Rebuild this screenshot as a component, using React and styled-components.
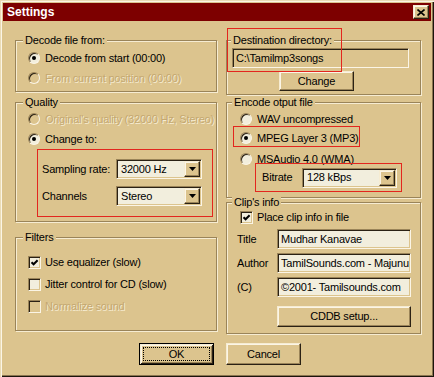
import React from 'react';
import styled, { createGlobalStyle, css } from 'styled-components';

const tan = '#dcc48e';
const cream = '#f2eedd';
const shade = '#9a8459';
const dark = '#2a2114';
const light = '#f6ecd2';
const hilite = '#fbf5e6';
const dim = '#c4a871';
const red = '#e3261e';

const GlobalStyle = createGlobalStyle`
  html, body { margin: 0; padding: 0; background: ${tan}; }
  body {
    font-family: "Liberation Sans", Arial, sans-serif;
    font-size: 11px;
    line-height: 13px;
    letter-spacing: -0.2px;
    color: #000;
  }
`;

const raised = css`
  box-sizing: border-box;
  background: ${tan};
  border: 1px solid;
  border-color: ${light} ${dark} ${dark} ${light};
  box-shadow: inset -1px -1px 0 ${shade}, inset 1px 1px 0 ${hilite};
`;

const sunken = css`
  box-sizing: border-box;
  border: 1px solid;
  border-color: ${shade} ${hilite} ${hilite} ${shade};
  box-shadow: inset 1px 1px 0 ${dark}, inset -1px -1px 0 ${tan};
`;

const Window = styled.div`
  width: 434px;
  height: 377px;
  box-sizing: border-box;
  padding: 3px 3px 0;
  background: ${tan};
  box-shadow: inset 1px 1px 0 #eadbb5, inset 2px 2px 0 ${hilite},
    inset -1px -1px 0 #1b150c, inset -2px -2px 0 #8b7550;
  display: flex;
  flex-direction: column;
`;

const TitleBar = styled.div`
  height: 18px;
  background: #7d0000;
  display: flex;
  align-items: center;
  justify-content: space-between;
  padding: 0 2px 0 4px;
`;

const TitleText = styled.span`
  color: #fff;
  font-weight: bold;
  font-size: 12px;
  letter-spacing: 0;
`;

const CloseButton = styled.div`
  ${raised};
  width: 16px;
  height: 14px;
  display: grid;
  place-items: center;
`;

const Body = styled.div`
  display: grid;
  grid-template-columns: 202px 195px;
  column-gap: 9px;
  align-items: start;
  padding: 19px 0 0 12px;
`;

const Column = styled.div`
  display: flex;
  flex-direction: column;
`;

const Group = styled.div`
  position: relative;
  box-sizing: border-box;
  height: ${p => p.$h}px;
  margin-top: ${p => p.$mt || 0}px;
  border: 1px solid ${shade};
  box-shadow: inset 1px 1px 0 ${light}, 1px 1px 0 ${light};
  display: flex;
  flex-direction: column;
  align-items: flex-start;
`;

const Caption = styled.div`
  margin: -7px 0 0 ${p => p.$ml}px;
  padding: 0 2px;
  height: 13px;
  background: ${tan};
  white-space: nowrap;
`;

/* red annotation frame drawn over the destination caption and path */
const Annotation = styled.div`
  position: absolute;
  left: 0;
  top: -13px;
  width: 115px;
  height: 44px;
  box-sizing: border-box;
  border: 1px solid ${red};
  pointer-events: none;
`;

const Stack = styled.div`
  display: flex;
  flex-direction: column;
  padding: ${p => p.$pt || 0}px 0 0 ${p => p.$pl}px;
`;

const Option = styled.label`
  box-sizing: border-box;
  display: flex;
  align-items: center;
  gap: ${p => p.$gap ?? 5}px;
  height: ${p => p.$h ?? 20}px;
  white-space: nowrap;
  color: ${p => (p.$disabled ? dim : '#000')};
  text-shadow: ${p => (p.$disabled ? `1px 1px 0 ${light}` : 'none')};
  ${p =>
    p.$marked &&
    css`
      width: 127px;
      height: 21px;
      margin: -3px 0 2px -7px;
      padding: 3px 0 0 6px;
      border: 1px solid ${red};
    `}
`;

const RadioDot = styled.span`
  box-sizing: border-box;
  flex: none;
  width: 12px;
  height: 12px;
  border-radius: 50%;
  background: ${p => (p.$disabled ? tan : cream)};
  border: 1px solid;
  border-color: ${shade} ${hilite} ${hilite} ${shade};
  box-shadow: inset 1px 1px 0 ${dark};
  display: grid;
  place-items: center;
  &::after {
    content: '';
    display: ${p => (p.$checked ? 'block' : 'none')};
    width: 4px;
    height: 4px;
    border-radius: 50%;
    background: #000;
  }
`;

const CheckBox = styled.span`
  ${sunken};
  flex: none;
  width: 13px;
  height: 13px;
  background: ${p => (p.$disabled ? tan : cream)};
  display: grid;
  place-items: center;
`;

const ChoiceBox = styled.div`
  box-sizing: border-box;
  width: 176px;
  height: 68px;
  margin-left: 21px;
  border: 1px solid ${red};
  display: grid;
  grid-template-columns: 74px 86px;
  grid-auto-rows: 20px;
  row-gap: 7px;
  align-items: center;
  padding: 9px 0 0 4px;
`;

const BitrateBox = styled.div`
  box-sizing: border-box;
  width: 147px;
  height: 29px;
  margin: -6px 0 0 28px;
  border: 1px solid ${red};
  display: grid;
  grid-template-columns: 40px 95px;
  align-items: center;
  padding-left: 6px;
`;

const Combo = styled.div`
  ${sunken};
  width: ${p => p.$w}px;
  height: 20px;
  background: ${cream};
  display: flex;
  align-items: center;
  padding: 1px;
`;

const ComboValue = styled.span`
  flex: 1;
  padding-left: 3px;
  white-space: nowrap;
`;

const DropButton = styled.span`
  ${raised};
  width: 16px;
  height: 16px;
  display: grid;
  place-items: center;
`;

const Field = styled.div`
  ${sunken};
  width: ${p => p.$w}px;
  height: 20px;
  margin: ${p => p.$m || 0};
  background: ${p => (p.$readOnly ? tan : cream)};
  display: flex;
  align-items: center;
  padding-left: 3px;
  white-space: nowrap;
  overflow: hidden;
`;

const ClipGrid = styled.div`
  display: grid;
  grid-template-columns: 40px 134px;
  grid-auto-rows: 20px;
  row-gap: 4px;
  align-items: center;
  margin: 3px 0 0 10px;
`;

const Button = styled.div`
  ${raised};
  width: ${p => p.$w}px;
  height: ${p => p.$h}px;
  margin: ${p => p.$m || 0};
  display: flex;
  align-items: center;
  justify-content: center;
  position: relative;
  ${p =>
    p.$default &&
    css`
      border: 1px solid #000;
      box-shadow: inset 1px 1px 0 ${light}, inset -1px -1px 0 ${dark},
        inset 2px 2px 0 ${hilite}, inset -2px -2px 0 ${shade};
      &::after {
        content: '';
        position: absolute;
        inset: 3px;
        border: 1px dotted #000;
      }
    `}
`;

const Footer = styled.div`
  display: flex;
  gap: 12px;
  padding: 9px 0 0 136px;
`;

const Arrow = () => (
  <svg width="7" height="4" viewBox="0 0 7 4">
    <path d="M0 0h7L3.5 4z" fill="#000" />
  </svg>
);

const Tick = () => (
  <svg width="9" height="9" viewBox="0 0 9 9">
    <path d="M1.5 4.2 3.6 6.3 7.6 2.2" fill="none" stroke="#000" strokeWidth="2" />
  </svg>
);

const Radio = ({ label, checked, disabled, marked }) => (
  <Option $disabled={disabled} $marked={marked}>
    <RadioDot $checked={checked} $disabled={disabled} />
    {label}
  </Option>
);

const Check = ({ label, checked, disabled, h = 22 }) => (
  <Option $disabled={disabled} $gap={4} $h={h}>
    <CheckBox $disabled={disabled}>{checked && <Tick />}</CheckBox>
    {label}
  </Option>
);

const Select = ({ value, w }) => (
  <Combo $w={w}>
    <ComboValue>{value}</ComboValue>
    <DropButton>
      <Arrow />
    </DropButton>
  </Combo>
);

export default function App() {
  return (
    <>
      <GlobalStyle />
      <Window>
        <TitleBar>
          <TitleText>Settings</TitleText>
          <CloseButton>
            <svg width="8" height="7" viewBox="0 0 8 7">
              <path d="M0.5 0.5 7.5 6.5M7.5 0.5 0.5 6.5" stroke="#000" strokeWidth="1.6" />
            </svg>
          </CloseButton>
        </TitleBar>

        <Body>
          <Column>
            <Group $h={52}>
              <Caption $ml={7}>Decode file from:</Caption>
              <Stack $pt={1} $pl={12}>
                <Radio label="Decode from start (00:00)" checked />
                <Radio label="From current position (00:00)" disabled />
              </Stack>
            </Group>

            <Group $h={120} $mt={10}>
              <Caption $ml={7}>Quality</Caption>
              <Stack $pl={12}>
                <Radio label="Original's quality (32000 Hz, Stereo)" disabled />
                <Radio label="Change to:" checked />
              </Stack>
              <ChoiceBox>
                <span>Sampling rate:</span>
                <Select value="32000 Hz" w={86} />
                <span>Channels</span>
                <Select value="Stereo" w={86} />
              </ChoiceBox>
            </Group>

            <Group $h={94} $mt={15}>
              <Caption $ml={7}>Filters</Caption>
              <Stack $pt={7} $pl={12}>
                <Check label="Use equalizer (slow)" checked />
                <Check label="Jitter control for CD (slow)" />
                <Check label="Normalize sound" disabled />
              </Stack>
            </Group>
          </Column>

          <Column>
            <Group $h={55}>
              <Caption $ml={4}>Destination directory:</Caption>
              <Field $w={177} $readOnly $m="1px 0 0 5px">
                C:\Tamilmp3songs
              </Field>
              <Button $w={75} $h={20} $m="3px 0 0 52px">Change</Button>
              <Annotation />
            </Group>

            <Group $h={96} $mt={7}>
              <Caption $ml={5}>Encode otput file</Caption>
              <Stack $pl={13}>
                <Radio label="WAV uncompressed" />
                <Radio label="MPEG Layer 3 (MP3)" checked marked />
                <Radio label="MSAudio 4.0 (WMA)" />
              </Stack>
              <BitrateBox>
                <span>Bitrate</span>
                <Select value="128 kBps" w={95} />
              </BitrateBox>
            </Group>

            <Group $h={132} $mt={4}>
              <Caption $ml={5}>Clip's info</Caption>
              <Stack $pl={13}>
                <Check label="Place clip info in file" checked h={17} />
              </Stack>
              <ClipGrid>
                <span>Title</span>
                <Field $w={134}>Mudhar Kanavae</Field>
                <span>Author</span>
                <Field $w={134}>TamilSounds.com - Majunu</Field>
                <span>(C)</span>
                <Field $w={134}>©2001- Tamilsounds.com</Field>
              </ClipGrid>
              <Button $w={134} $h={21} $m="9px 0 0 50px">CDDB setup...</Button>
            </Group>
          </Column>
        </Body>

        <Footer>
          <Button $w={75} $h={22} $default>OK</Button>
          <Button $w={75} $h={22}>Cancel</Button>
        </Footer>
      </Window>
    </>
  );
}
